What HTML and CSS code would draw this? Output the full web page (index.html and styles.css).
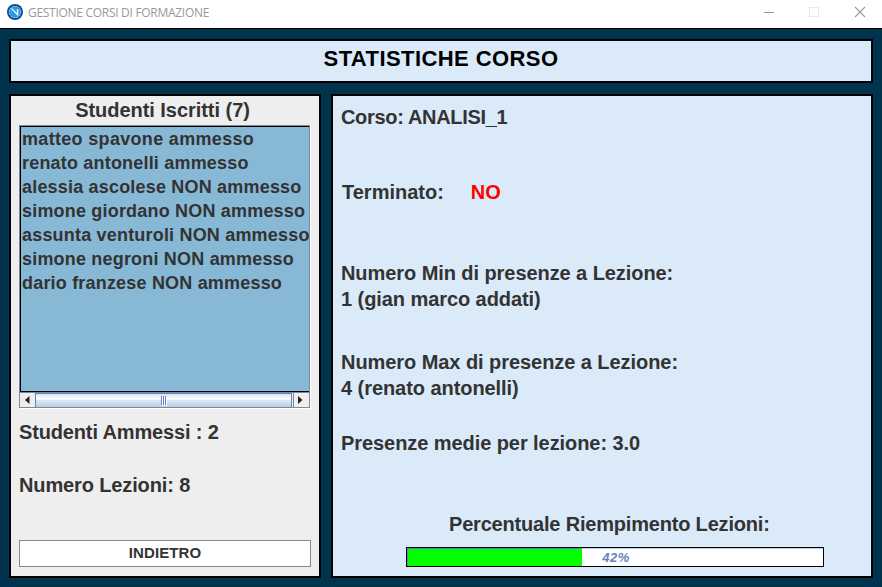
FILE: index.html
```html
<!DOCTYPE html>
<html lang="it">
<head>
<meta charset="utf-8">
<title>GESTIONE CORSI DI FORMAZIONE</title>
<link rel="stylesheet" href="styles.css">
</head>
<body>
<header class="titlebar">
  <svg class="logo" width="16" height="16" viewBox="0 0 16 16">
    <circle cx="8" cy="8" r="8" fill="#12458f"/>
    <circle cx="8" cy="8" r="6.3" fill="#2c9add"/>
    <circle cx="8" cy="8" r="5.7" fill="none" stroke="#d4eefb" stroke-width="1" stroke-dasharray="1 1.98"/>
    <path d="M4.600 4.600L10.600 10.600V5.200" fill="none" stroke="#fff" stroke-width="1.3"/>
  </svg>
  <span class="app-name">GESTIONE CORSI DI FORMAZIONE</span>
  <svg class="controls" width="104" height="12" viewBox="0 0 104 12" fill="none">
    <path d="M1 6.500H11" stroke="#999"/>
    <rect x="46.500" y="1.500" width="9" height="9" stroke="#e8e8e8"/>
    <path d="M92 1L102 11M102 1L92 11" stroke="#999" stroke-width="1.1"/>
  </svg>
</header>
<main class="window">
  <h1 class="panel banner">STATISTICHE CORSO</h1>
  <div class="columns">
    <section class="panel students">
      <h2 class="label list-title">Studenti Iscritti (7)</h2>
      <div class="scroll-pane">
        <ul class="list">
          <li class="wide">matteo spavone ammesso</li>
          <li>renato antonelli ammesso</li>
          <li>alessia ascolese NON ammesso</li>
          <li>simone giordano NON ammesso</li>
          <li>assunta venturoli NON ammesso</li>
          <li>simone negroni NON ammesso</li>
          <li>dario franzese NON ammesso</li>
        </ul>
        <div class="scrollbar">
          <span class="arrow"><svg width="5" height="8" viewBox="0 0 5 8"><path d="M4.500 0V8L0 4Z" fill="#222"/></svg></span>
          <span class="thumb"><i></i><i></i><i></i></span>
          <span class="arrow arrow-right"><svg width="5" height="8" viewBox="0 0 5 8"><path d="M0 0V8L4.500 4Z" fill="#222"/></svg></span>
        </div>
      </div>
      <p class="label admitted">Studenti Ammessi : 2</p>
      <p class="label lessons">Numero Lezioni: 8</p>
      <button class="back">INDIETRO</button>
    </section>
    <section class="panel details">
      <p class="label course">Corso: ANALISI_1</p>
      <p class="label finished"><span>Terminato:</span><span class="no">NO</span></p>
      <p class="label minimum">Numero Min di presenze a Lezione:<br>1 (gian marco addati)</p>
      <p class="label maximum">Numero Max di presenze a Lezione:<br>4 (renato antonelli)</p>
      <p class="label average">Presenze medie per lezione: 3.0</p>
      <p class="label fill-title">Percentuale Riempimento Lezioni:</p>
      <div class="progress"><div class="bar" style="width:42%"></div><span class="percent">42%</span></div>
    </section>
  </div>
</main>
</body>
</html>
```
FILE: styles.css
```css
* { box-sizing: border-box; margin: 0; padding: 0; }
body {
  width: 882px; height: 587px; overflow: hidden;
  display: flex; flex-direction: column;
  background: #00334e; color: #333;
  font-family: "Liberation Sans", Arial, sans-serif;
}
.titlebar {
  height: 29px; flex: none; background: #fff; border-bottom: 1px solid #000;
  display: flex; align-items: flex-start; padding: 4px 15px 0 7px;
}
.app-name {
  font: 12px/18px "Open Sans", "Noto Sans", sans-serif;
  color: #999; margin-left: 5px; letter-spacing: -0.29px; white-space: nowrap;
}
.controls { margin: 2px 0 0 auto; }
.window { flex: 1; padding: 10px 9px 9px; display: flex; flex-direction: column; gap: 11px; }
.panel { border: 2px solid #000; background: #daeaf9; }
.banner { height: 44px; font-size: 22px; line-height: 36px; color: #000; text-align: center; letter-spacing: 0.42px; }
.columns { height: 484px; display: grid; grid-template-columns: 312px 542px; gap: 10px; }
.students { background: #eee; padding: 0 8px; display: flex; flex-direction: column; }
.label { font-size: 20px; font-weight: bold; line-height: 26px; white-space: nowrap; }
.list-title { text-align: center; height: 29px; line-height: 28px; padding-right: 5px; letter-spacing: -0.04px; }
.scroll-pane {
  width: 291px; height: 283px; flex: none;
  border: 1px solid #7a8a99; box-shadow: 1px 1px 0 #fff;
  display: flex; flex-direction: column;
}
.list {
  height: 266px; flex: none; list-style: none; overflow: hidden;
  background: #87b9d6; border-left: 1px solid #000; border-top: 1px solid #000; border-bottom: 1px solid #000;
  font-size: 18px; font-weight: bold; line-height: 24px; white-space: nowrap; padding-left: 1px;
  letter-spacing: 0.19px;
}
.wide { letter-spacing: 0.32px; }
.scrollbar { flex: 1; display: flex; background: #eee; border-top: 1px solid #7a8a99; }
.arrow { width: 15px; display: flex; align-items: center; justify-content: center; padding-right: 1px; }
.arrow-right { width: 16px; border-left: 1px solid #7a8a99; margin-left: 1px; padding-right: 2px; }
.thumb {
  flex: 1; border: 1px solid #6382bf; border-bottom: 0;
  background: linear-gradient(#d5e2ef, #fff 38%, #dce8f4 50%, #b8cfe5);
  display: flex; justify-content: center; align-items: center; gap: 1px;
}
.thumb i { width: 1px; height: 9px; background: #6382bf; box-shadow: 1px 1px 0 #fff; }
.admitted { margin-top: 11px; letter-spacing: -0.15px; }
.lessons { margin-top: 27px; letter-spacing: -0.13px; }
.back {
  width: 292px; height: 27px; margin-top: 42px; flex: none;
  background: #fff; border: 1px solid #7a8a99; color: #333;
  font: bold 15px/23px "Liberation Sans", Arial, sans-serif; letter-spacing: 0.1px;
  padding-bottom: 2px;
}
.details { padding: 8px; }
.course { letter-spacing: -0.33px; }
.finished { margin: 49px 0 0 1px; display: flex; }
.no { color: #f00; margin-left: 27px; }
.minimum { margin-top: 55px; letter-spacing: -0.07px; }
.maximum { margin-top: 37px; letter-spacing: -0.06px; }
.average { margin-top: 29px; letter-spacing: -0.07px; }
.fill-title { margin: 55px 0 0 108px; letter-spacing: -0.19px; }
.progress {
  position: relative; width: 418px; height: 20px; margin: 10px 0 0 65px;
  border: 1px solid #000; background: #fff; box-shadow: inset 0 1px 0 #b8cfe5;
}
.bar { height: 100%; background: #0f0; border-left: 1px solid #6382bf; border-top: 1px solid #6382bf; }
.percent {
  position: absolute; inset: 0; text-align: center; padding-left: 2px;
  font: italic bold 13px/19px "Liberation Sans", Arial, sans-serif; color: #6382bf; letter-spacing: 0.5px;
}
```
